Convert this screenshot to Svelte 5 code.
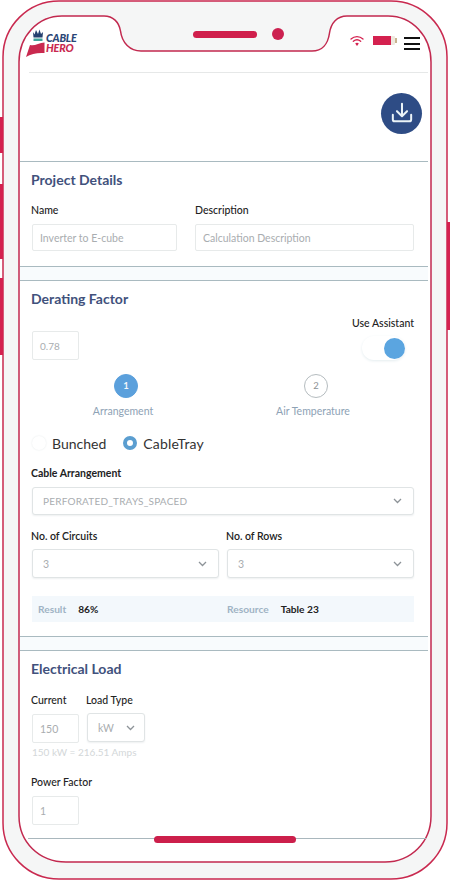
<script>
  const chevron = 'M1 1l3.500 3.500 3.500-3.500'
</script>

<div class="phone">
  <svg class="frame" width="450" height="880" viewBox="0 0 450 880" aria-hidden="true">
    <rect x="3" y="1" width="444" height="878" rx="56" fill="#f5f6f6" stroke="#c9294f" stroke-width="1.5" />
    <path
      d="M19 62C19 36 38 16 62 16H104C113 16 119 22 120.500 31C122 43 130 51 141 51H312C322 51 328 44 329.500 33C331 23 337 16 347 16H388C412 16 431 36 431 62V816C431 842 411 862 385 862H66C39 862 19 842 19 816Z"
      fill="#fff"
      stroke="#c2294f"
      stroke-width="1.5"
    />
    <rect x="0" y="117" width="3" height="36" fill="#d4214f" />
    <rect x="0" y="184" width="3" height="75" fill="#d4214f" />
    <rect x="0" y="278" width="3" height="77" fill="#d4214f" />
    <rect x="447" y="222" width="3" height="108" fill="#d4214f" />
  </svg>

  <div class="top">
    <div class="logo">
      <svg width="20" height="28" viewBox="0 0 20 28" aria-hidden="true">
        <path d="M7 3l1.500 2.500L10 1l2 4 1.500-4.500L15 5l2-2-.500 5.500H7.500z" fill="#25406f" />
        <path d="M7.500 9.500h9v2.500h-9z" fill="#3fa39a" />
        <path d="M4 16C8 17.500 13 14 18.500 13.500V24C12 23.500 5 24.500 0 28Z" fill="#c9294f" />
      </svg>
      <div class="wordmark">
        <span class="cable">CABLE</span>
        <span class="hero">HERO</span>
      </div>
    </div>
    <div class="speaker"></div>
    <div class="camera"></div>
    <svg class="wifi" width="14" height="12" viewBox="0 0 14 12" aria-hidden="true">
      <g fill="none" stroke="#d4214f" stroke-width="1.300" stroke-linecap="round">
        <path d="M1 4C4.500 .8 9.500 .8 13 4" />
        <path d="M3.300 6.300C5.500 4.400 8.500 4.400 10.700 6.300" />
      </g>
      <path d="M5.200 8.400C6.200 7.500 7.800 7.500 8.800 8.400L7 11z" fill="#d4214f" />
    </svg>
    <div class="battery"><span></span></div>
    <div class="burger"><i></i><i></i><i></i></div>
  </div>

  <main>
    <section class="actions">
      <button class="download" aria-label="Download">
        <svg width="22" height="22" viewBox="0 0 24 24" fill="none" stroke="#eaf3f7" stroke-width="2.200" stroke-linecap="round" stroke-linejoin="round">
          <path d="M2 14v5a2 2 0 0 0 2 2h16a2 2 0 0 0 2-2v-5" />
          <path d="M12 2v13M6.500 10l5.500 5.500 5.500-5.500" />
        </svg>
      </button>
    </section>

    <section class="card project">
      <h2>Project Details</h2>
      <div class="two">
        <div>
          <label class="lead" for="name">Name</label>
          <div id="name" class="box tall">Inverter to E-cube</div>
        </div>
        <div>
          <label for="desc">Description</label>
          <div id="desc" class="box tall">Calculation Description</div>
        </div>
      </div>
    </section>
    <div class="band"></div>

    <section class="card derating">
      <h2>Derating Factor</h2>
      <div class="factor">
        <div class="box small">0.78</div>
        <div class="assistant">
          <span class="lbl">Use Assistant</span>
          <div class="toggle"><span></span></div>
        </div>
      </div>

      <div class="stepper">
        <div class="step">
          <div class="dot active">1</div>
          <span>Arrangement</span>
        </div>
        <div class="step">
          <div class="dot">2</div>
          <span>Air Temperature</span>
        </div>
      </div>

      <div class="radios">
        <span class="radio"></span>
        <span class="rlabel">Bunched</span>
        <span class="radio on"></span>
        <span class="rlabel">CableTray</span>
      </div>

      <span class="lbl arrangement">Cable Arrangement</span>
      <div class="box select wide">
        <span class="caps">PERFORATED_TRAYS_SPACED</span>
        <svg width="9" height="6" viewBox="0 0 9 6"><path d={chevron} /></svg>
      </div>

      <div class="circuits">
        <div>
          <span class="lbl">No. of Circuits</span>
          <div class="box select">
            <span>3</span>
            <svg width="9" height="6" viewBox="0 0 9 6"><path d={chevron} /></svg>
          </div>
        </div>
        <div>
          <span class="lbl">No. of Rows</span>
          <div class="box select">
            <span>3</span>
            <svg width="9" height="6" viewBox="0 0 9 6"><path d={chevron} /></svg>
          </div>
        </div>
      </div>

      <div class="result">
        <div><span class="key">Result</span><b>86%</b></div>
        <div><span class="key">Resource</span><b>Table 23</b></div>
      </div>
    </section>
    <div class="band"></div>

    <section class="card load">
      <h2>Electrical Load</h2>
      <div class="loadrow">
        <div>
          <span class="lbl lead">Current</span>
          <div class="box small">150</div>
        </div>
        <div>
          <span class="lbl">Load Type</span>
          <div class="box select unit">
            <span>kW</span>
            <svg width="9" height="6" viewBox="0 0 9 6"><path d={chevron} /></svg>
          </div>
        </div>
      </div>
      <p class="hint">150 kW = 216.51 Amps</p>
      <span class="lbl lead power">Power Factor</span>
      <div class="box small">1</div>
    </section>
    <div class="home"></div>
  </main>
</div>

<style>
  :global(body) {
    background: #fff;
  }
  .phone {
    position: relative;
    width: 450px;
    height: 880px;
    overflow: hidden;
    font-family: Lato, "Open Sans", sans-serif;
    color: #222;
  }
  .frame {
    position: absolute;
    top: 0;
    left: 0;
  }
  .top {
    position: relative;
    display: flex;
    align-items: flex-start;
    height: 72px;
    padding-left: 26px;
    box-sizing: border-box;
  }
  .logo {
    display: flex;
    width: 54px;
    margin-top: 29px;
  }
  .wordmark {
    display: flex;
    flex-direction: column;
    margin-top: 4px;
    font-style: italic;
    font-weight: 900;
    font-size: 10.800px;
    line-height: 9.500px;
    letter-spacing: -0.2px;
  }
  .cable {
    color: #2b4676;
  }
  .hero {
    color: #c9294f;
  }
  .speaker {
    width: 64px;
    height: 7px;
    margin: 31px 0 0 113px;
    border-radius: 4px;
    background: #d01f4c;
  }
  .camera {
    width: 12px;
    height: 12px;
    margin: 28px 0 0 15px;
    border-radius: 50%;
    background: #cc2150;
  }
  .wifi {
    margin: 35px 0 0 66px;
  }
  .battery {
    position: relative;
    width: 22px;
    height: 9px;
    margin: 36px 2px 0 9px;
    border-radius: 1px;
    background: #efe9df;
  }
  .battery::after {
    content: "";
    position: absolute;
    right: -2px;
    top: 2px;
    width: 2px;
    height: 5px;
    background: #c8b490;
  }
  .battery span {
    display: block;
    width: 18px;
    height: 9px;
    background: #d4214f;
  }
  .burger {
    display: flex;
    flex-direction: column;
    gap: 3.500px;
    width: 16px;
    margin: 37px 0 0 7px;
  }
  .burger i {
    height: 2px;
    background: #111;
  }
  main {
    position: relative;
    width: 408px;
    margin-left: 20px;
  }
  .actions {
    display: flex;
    justify-content: flex-end;
    align-items: center;
    height: 89px;
    margin-left: 9px;
    padding: 0 6px 8px 0;
    border-top: 1px solid #e6e8e8;
    box-sizing: border-box;
  }
  .download {
    display: flex;
    align-items: center;
    justify-content: center;
    width: 41px;
    height: 41px;
    padding: 0;
    border: 0;
    border-radius: 50%;
    background: #2e4c85;
  }
  .card {
    padding: 9px 14px 0 12px;
    border-top: 1px solid #a9bac0;
    box-sizing: border-box;
  }
  .band {
    height: 13px;
    background: #f8fbfd;
  }
  .project {
    height: 106px;
    border-bottom: 1px solid #a9bac0;
  }
  .derating {
    height: 357px;
    border-bottom: 1px solid #a9bac0;
  }
  .load {
    height: 187px;
  }
  h2 {
    margin: 0 0 0 -1px;
    font-size: 14px;
    line-height: 18px;
    font-weight: 700;
    color: #41517c;
  }
  label,
  .lbl {
    display: block;
    font-size: 10.500px;
    line-height: 14px;
    font-weight: 500;
    color: #222;
  }
  .lead {
    margin-left: -1px;
  }
  .two {
    display: grid;
    grid-template-columns: 145px 219px;
    gap: 18px;
    margin-top: 14px;
  }
  .box {
    display: flex;
    align-items: center;
    height: 29px;
    margin-top: 6px;
    padding: 0 7px;
    box-sizing: border-box;
    border: 1px solid #e7eaea;
    border-radius: 2px;
    background: #fff;
    font-size: 10.500px;
    color: #a9adb0;
  }
  .tall {
    height: 27px;
    margin-top: 7px;
  }
  .small {
    width: 47px;
  }
  .factor {
    display: flex;
    justify-content: space-between;
    align-items: flex-end;
    margin-top: 8px;
  }
  .factor .box {
    margin-top: 0;
    font-size: 10px;
  }
  .assistant {
    display: flex;
    flex-direction: column;
    align-items: flex-end;
  }
  .toggle {
    display: flex;
    justify-content: flex-end;
    align-items: center;
    width: 43px;
    height: 24px;
    margin-top: 6px;
    margin-right: 9px;
    border-radius: 12px;
    box-shadow: 0 1px 3px #e4ecef;
  }
  .toggle span {
    width: 21px;
    height: 21px;
    border-radius: 50%;
    background: #5ba5e0;
  }
  .stepper {
    display: grid;
    grid-template-columns: 188px 192px;
    margin-top: 14px;
  }
  .step {
    display: flex;
    flex-direction: column;
    align-items: center;
    font-size: 10.500px;
    line-height: 14px;
    color: #8ea2b5;
  }
  .step span {
    margin: 6px 6px 0 0;
  }
  .dot {
    width: 24px;
    height: 24px;
    box-sizing: border-box;
    border: 1px solid #b5bcbf;
    border-radius: 50%;
    text-align: center;
    line-height: 22px;
    font-size: 9.500px;
    color: #8b9296;
  }
  .dot.active {
    border-color: #5ba0dc;
    background: #5ba0dc;
    color: #f4f8fb;
    font-weight: 700;
  }
  .radios {
    display: flex;
    align-items: center;
    height: 18px;
    margin-top: 16px;
    font-size: 14px;
    color: #333;
  }
  .radio {
    width: 14px;
    height: 14px;
    box-sizing: border-box;
    border-radius: 50%;
    box-shadow: 0 0 2px #e3e7e8;
  }
  .radio.on {
    margin-left: 17px;
    border: 4.500px solid #5b9ed0;
    background: #fff;
    box-shadow: none;
  }
  .rlabel {
    margin-left: 6px;
  }
  .radio.on + .rlabel {
    margin-left: 6px;
    letter-spacing: 0.2px;
  }
  .arrangement {
    margin: 14px 0 0 -1px;
    font-weight: 700;
  }
  .select {
    justify-content: space-between;
    padding: 0 11px 0 10px;
    border-color: #e0e4e5;
    box-shadow: 0 1px 2px #eef0f1;
    border-radius: 3px;
  }
  .select svg {
    flex: none;
    fill: none;
    stroke: #8d9398;
    stroke-width: 1.300;
  }
  .wide {
    height: 28px;
    margin-top: 7px;
  }
  .caps {
    letter-spacing: 0.2px;
    font-size: 10px;
  }
  .circuits {
    display: grid;
    grid-template-columns: 187px 187px;
    gap: 8px;
    margin-top: 14px;
  }
  .circuits .lbl {
    margin-left: -1px;
    font-weight: 600;
  }
  .result {
    display: grid;
    grid-template-columns: 195px 187px;
    align-items: center;
    height: 26px;
    margin-top: 18px;
    background: #f3f8fc;
    font-size: 10.200px;
  }
  .key {
    color: #9fb3c4;
    font-weight: 700;
  }
  .result b {
    font-weight: 700;
    color: #222;
    margin-left: 12px;
  }
  .result > div:first-child {
    padding-left: 6px;
  }
  .loadrow {
    display: flex;
    gap: 7px;
    margin-top: 15px;
  }
  .unit {
    width: 58px;
    margin-left: 1px;
    padding: 0 9px 0 10px;
  }
  .hint {
    margin: 2px 0 0;
    font-size: 10px;
    line-height: 14px;
    color: #d3d7d9;
  }
  .power {
    margin-top: 16px;
  }
  .load .box.small:last-child {
    margin-top: 7px;
  }
  .home {
    position: absolute;
    left: 8px;
    right: 2px;
    top: 766px;
    height: 1px;
    background: #a9b7bd;
  }
  .home::after {
    content: "";
    position: absolute;
    left: 126px;
    top: -2px;
    width: 142px;
    height: 7px;
    border-radius: 4px;
    background: #cc1f4b;
  }
</style>
